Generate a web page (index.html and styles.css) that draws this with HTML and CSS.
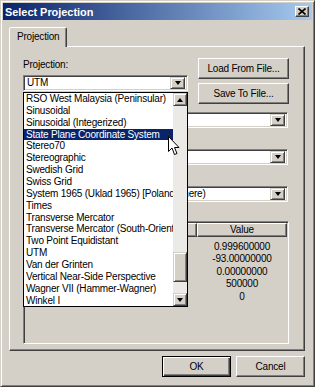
FILE: index.html
```html
<!DOCTYPE html>
<html lang="en">
<head>
  <meta charset="UTF-8"/>
  <title>Select Projection</title>
  <link rel="stylesheet" href="styles.css">
</head>
<body>
  <div class="window">
    <div class="titlebar">
      <span class="title">Select Projection</span>
      <span class="close-btn">
        <svg width="8" height="7" viewBox="0 0 8 7"><path d="M0.5 0.5L7.5 6.5M7.5 0.5L0.5 6.5" stroke="#000" stroke-width="1.6"/></svg>
      </span>
    </div>

    <div class="dialog-body">
      <div class="tabs"><div class="tab">Projection</div></div>

      <div class="panel">
        <div class="top-row">
          <div class="proj-col">
            <div class="label">Projection:</div>
            <div class="combo-wrap">
              <div class="combo short"><span class="combo-text">UTM</span><span class="drop-btn"></span></div>

              <div class="dropdown">
                <ul class="options">
                  <li>RSO West Malaysia (Peninsular)</li>
                  <li>Sinusoidal</li>
                  <li>Sinusoidal (Integerized)</li>
                  <li class="selected">State Plane Coordinate System</li>
                  <li>Stereo70</li>
                  <li>Stereographic</li>
                  <li>Swedish Grid</li>
                  <li>Swiss Grid</li>
                  <li>System 1965 (Uklad 1965) [Poland Sphere]</li>
                  <li>Times</li>
                  <li>Transverse Mercator</li>
                  <li>Transverse Mercator (South-Oriented)</li>
                  <li>Two Point Equidistant</li>
                  <li>UTM</li>
                  <li>Van der Grinten</li>
                  <li>Vertical Near-Side Perspective</li>
                  <li>Wagner VII (Hammer-Wagner)</li>
                  <li>Winkel I</li>
                </ul>
                <div class="scrollbar">
                  <div class="sb-btn"><span class="tri-up"></span></div>
                  <div class="sb-track"><div class="sb-thumb"></div></div>
                  <div class="sb-btn"><span class="tri-down"></span></div>
                </div>
              </div>
            </div>
          </div>
          <div class="btn-col">
            <button class="btn">Load From File...</button>
            <button class="btn">Save To File...</button>
          </div>
        </div>

        <!-- fields below are mostly covered by the open list -->
        <div class="combo field first"><span class="combo-text"></span><span class="drop-btn"></span></div>
        <div class="combo field"><span class="combo-text"></span><span class="drop-btn"></span></div>
        <div class="combo field"><span class="combo-text">System 1965 Uklad 1965 (Polska Sphere)</span><span class="drop-btn"></span></div>

        <div class="listview">
          <div class="lv-head">
            <div class="lv-hcell name"></div>
            <div class="lv-hcell value">Value</div>
          </div>
          <div class="lv-body">
            <div class="lv-row"><span class="name"></span><span class="value">0.999600000</span></div>
            <div class="lv-row"><span class="name"></span><span class="value">-93.00000000</span></div>
            <div class="lv-row"><span class="name"></span><span class="value">0.00000000</span></div>
            <div class="lv-row"><span class="name"></span><span class="value">500000</span></div>
            <div class="lv-row"><span class="name"></span><span class="value">0</span></div>
          </div>
        </div>
      </div>

      <div class="actions">
        <button class="btn default">OK</button>
        <button class="btn">Cancel</button>
      </div>
    </div>

    <!-- mouse pointer over the open list -->
    <svg class="cursor" width="12" height="20" viewBox="0 0 12 20">
      <path d="M0.5 0.5V15.5L4 12L6.5 18.5L9 17.5L6.5 11.5H11Z" fill="#fff" stroke="#000" stroke-width="1"/>
    </svg>
  </div>
</body>
</html>
```

FILE: styles.css
```css
body { margin:0; padding:0; background:#D4D0C8; font-family:"Liberation Sans", Arial, sans-serif; font-size:10px; letter-spacing:-0.2px; color:#000; }

.window { position:relative; width:315px; height:387px; box-sizing:border-box; background:#D4D0C8; border:1px solid; border-color:#D4D0C8 #404040 #404040 #D4D0C8; box-shadow:inset 1px 1px #fff, inset -1px -1px #808080; padding:2px; display:flex; flex-direction:column; overflow:hidden; }

.titlebar { flex:none; height:17px; display:flex; align-items:center; justify-content:space-between; padding:0 3px 0 2px; background:linear-gradient(to right, #0A246A, #A6CAF0); }
.title { color:#fff; font-weight:bold; font-size:10.9px; letter-spacing:0; }
.close-btn { width:14px; height:11px; box-sizing:border-box; background:#D4D0C8; border:1px solid; border-color:#fff #404040 #404040 #fff; box-shadow:inset -1px -1px #808080; display:flex; align-items:center; justify-content:center; }
.close-btn svg { display:block; }

.dialog-body { flex:1; padding:7px 7px 0 6px; }

.tabs { display:flex; }
.tab { position:relative; z-index:1; height:19px; line-height:18px; padding:0 7px; background:#D4D0C8; border:1px solid; border-bottom:none; border-color:#fff #404040 transparent #fff; border-radius:2px 2px 0 0; box-shadow:inset -1px 0 #808080; margin-bottom:-1px; }

.panel { border:1px solid; border-color:#fff #404040 #404040 #fff; box-shadow:inset -1px -1px #808080; padding:11px 13px 6px 13px; }

.top-row { display:flex; align-items:flex-start; gap:10px; height:50px; }
.proj-col { width:165px; }
.btn-col { width:91px; display:flex; flex-direction:column; gap:4px; }

.label { height:12px; line-height:12px; margin-top:1px; }

.combo-wrap { position:relative; margin-top:4px; }
.combo { width:265px; height:16px; box-sizing:border-box; background:#fff; border:1px solid; border-color:#808080 #fff #fff #808080; box-shadow:inset 1px 1px #404040, inset -1px -1px #D4D0C8; display:flex; align-items:center; padding:2px 2px 2px 3px; overflow:hidden; }
.combo.short { width:165px; }
.combo.field { margin-top:21px; }
.combo.field.first { margin-top:4px; }
.combo-text { flex:1; white-space:nowrap; overflow:hidden; line-height:12px; }
.drop-btn { width:15px; height:12px; flex:none; box-sizing:border-box; background:#D4D0C8; border:1px solid; border-color:#D4D0C8 #404040 #404040 #D4D0C8; box-shadow:inset 1px 1px #fff, inset -1px -1px #808080; display:flex; align-items:center; justify-content:center; }
.drop-btn::after { content:""; border-left:3.5px solid transparent; border-right:3.5px solid transparent; border-top:4px solid #000; }

.btn { font:inherit; letter-spacing:inherit; color:#000; background:#D4D0C8; height:21px; padding:0; border:1px solid; border-color:#fff #404040 #404040 #fff; box-shadow:inset -1px -1px #808080; }
.btn-col .btn { width:91px; }

/* open drop-down list of the Projection combo */
.dropdown { position:absolute; z-index:10; left:0; top:17px; width:165px; box-sizing:border-box; background:#fff; border:1px solid #000; display:flex; }
.options { list-style:none; margin:0; padding:0; width:149px; }
.options li { height:11.86px; line-height:11.86px; padding-left:2px; white-space:nowrap; overflow:hidden; }
.options li.selected { background:#0A246A; color:#fff; }

.scrollbar { width:14px; display:flex; flex-direction:column; }
.sb-btn { height:13px; box-sizing:border-box; background:#D4D0C8; border:1px solid; border-color:#D4D0C8 #404040 #404040 #D4D0C8; box-shadow:inset 1px 1px #fff, inset -1px -1px #808080; display:flex; align-items:center; justify-content:center; }
.tri-up { border-left:3.5px solid transparent; border-right:3.5px solid transparent; border-bottom:4px solid #000; }
.tri-down { border-left:3.5px solid transparent; border-right:3.5px solid transparent; border-top:4px solid #000; }
.sb-track { flex:1; background:#ECEAE6; padding-top:146px; }
.sb-thumb { height:30px; box-sizing:border-box; background:#D4D0C8; border:1px solid; border-color:#D4D0C8 #404040 #404040 #D4D0C8; box-shadow:inset 1px 1px #fff, inset -1px -1px #808080; }

.listview { width:266px; height:123px; box-sizing:border-box; margin-top:19px; border:1px solid; border-color:#808080 #fff #fff #808080; box-shadow:inset 1px 1px #404040, inset -1px -1px #D4D0C8; padding:1px; }
.lv-head { display:flex; height:14px; }
.lv-hcell { box-sizing:border-box; line-height:12px; border:1px solid; border-color:#fff #404040 #404040 #fff; box-shadow:inset -1px -1px #808080; padding:0 4px; }
.lv-hcell.name { width:172px; }
.lv-hcell.value { width:90px; text-align:center; }
.lv-body { padding-top:4px; }
.lv-row { display:flex; height:12.4px; line-height:12.4px; }
.lv-row .name { width:172px; }
.lv-row .value { width:90px; text-align:center; }

.actions { display:flex; justify-content:flex-end; gap:5px; margin-top:5px; }
.actions .btn { width:69px; }
.btn.default { border:1px solid #000; box-shadow:inset 1px 1px #fff, inset -1px -1px #404040, inset -2px -2px #808080; }

.cursor { position:absolute; left:167px; top:135px; z-index:20; }
```
